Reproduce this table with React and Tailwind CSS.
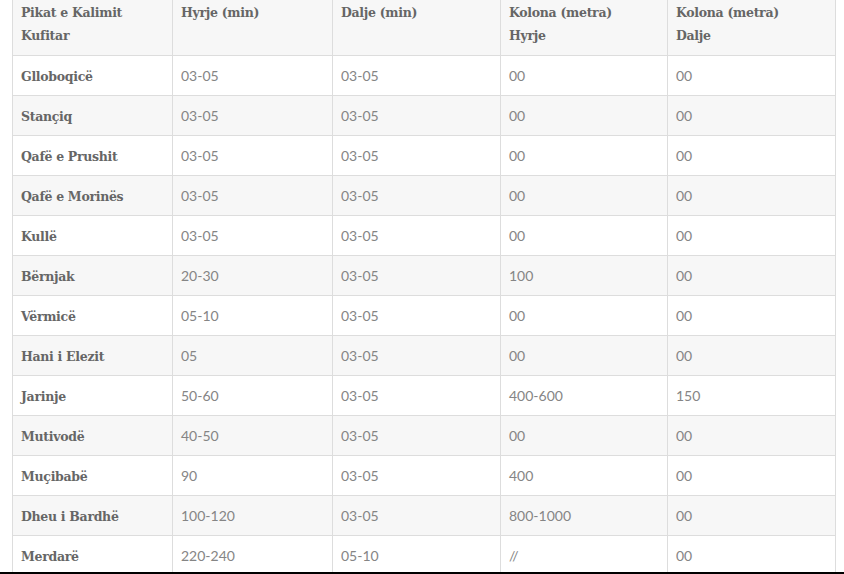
const rows = [
  ['Glloboqicë', '03-05', '03-05', '00', '00'],
  ['Stançiq', '03-05', '03-05', '00', '00'],
  ['Qafë e Prushit', '03-05', '03-05', '00', '00'],
  ['Qafë e Morinës', '03-05', '03-05', '00', '00'],
  ['Kullë', '03-05', '03-05', '00', '00'],
  ['Bërnjak', '20-30', '03-05', '100', '00'],
  ['Vërmicë', '05-10', '03-05', '00', '00'],
  ['Hani i Elezit', '05', '03-05', '00', '00'],
  ['Jarinje', '50-60', '03-05', '400-600', '150'],
  ['Mutivodë', '40-50', '03-05', '00', '00'],
  ['Muçibabë', '90', '03-05', '400', '00'],
  ['Dheu i Bardhë', '100-120', '03-05', '800-1000', '00'],
  ['Merdarë', '220-240', '05-10', '//', '00'],
];

const headCell =
  "font-['DejaVu_Serif',serif] border border-[#dddddd] px-2 pt-2 pb-2 text-left align-top font-bold text-[12.5px] leading-[23px] text-[#666666] tracking-[-0.3px]";

const App = () => {
  return (
    <div className="w-[844px] h-[574px] bg-white flex flex-col overflow-hidden">
      <div className="flex-1 overflow-hidden pl-3">
        {/* Table (scrolled so its top edge is just above the view) */}
        <table className="-mt-[8px] border-collapse table-fixed w-[823px]">
          <colgroup>
            <col className="w-[160px]" />
            <col className="w-[160px]" />
            <col className="w-[168px]" />
            <col className="w-[167px]" />
            <col className="w-[168px]" />
          </colgroup>
          <thead>
            <tr className="bg-[#f7f7f7]">
              <th className={headCell}>
                Pikat e Kalimit<br />Kufitar
              </th>
              <th className={headCell}>Hyrje (min)</th>
              <th className={headCell}>Dalje (min)</th>
              <th className={headCell}>
                Kolona (metra)<br />Hyrje
              </th>
              <th className={headCell}>
                Kolona (metra)<br />Dalje
              </th>
            </tr>
          </thead>
          <tbody>
            {rows.map((r, i) => (
              <tr key={r[0]} className={i % 2 === 1 ? 'bg-[#f7f7f7]' : 'bg-white'}>
                <td className="font-['DejaVu_Serif',serif] border border-[#dddddd] px-2 pt-[2px] pb-0 h-10 align-middle font-bold text-[12.5px] leading-5 text-[#666666] tracking-[-0.3px]">
                  {r[0]}
                </td>
                {r.slice(1).map((v, j) => (
                  <td
                    key={j}
                    className="font-['Lato',sans-serif] border border-[#dddddd] px-2 py-0 h-10 align-middle text-[14px] leading-5 font-normal text-[#858585]"
                  >
                    {v}
                  </td>
                ))}
              </tr>
            ))}
          </tbody>
        </table>
      </div>
      <div className="h-[2px] bg-black" />
    </div>
  );
};

export default App;
